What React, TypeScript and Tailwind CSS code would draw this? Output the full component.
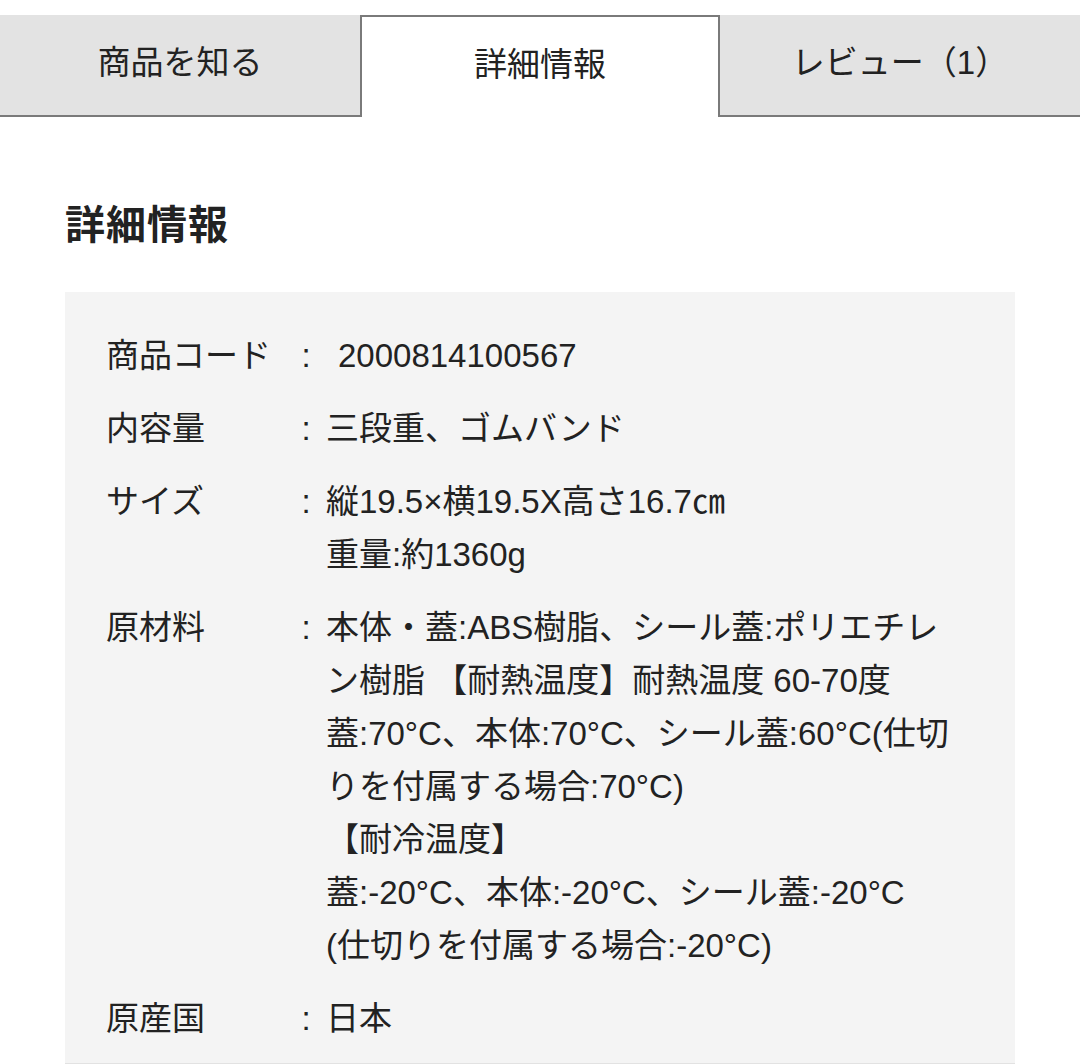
import { useState } from "react";

const tabs = ["商品を知る", "詳細情報", "レビュー（1）"];

interface SpecRow {
  label: string;
  lines: string[];
  pad?: boolean;
}

const rows: SpecRow[] = [
  { label: "商品コード", lines: ["2000814100567"], pad: true },
  { label: "内容量", lines: ["三段重、ゴムバンド"] },
  { label: "サイズ", lines: ["縦19.5×横19.5X高さ16.7㎝", "重量:約1360g"] },
  {
    label: "原材料",
    lines: [
      "本体・蓋:ABS樹脂、シール蓋:ポリエチレ",
      "ン樹脂 【耐熱温度】耐熱温度 60-70度",
      "蓋:70°C、本体:70°C、シール蓋:60°C(仕切",
      "りを付属する場合:70°C)",
      "【耐冷温度】",
      "蓋:-20°C、本体:-20°C、シール蓋:-20°C",
      "(仕切りを付属する場合:-20°C)",
    ],
  },
  { label: "原産国", lines: ["日本"] },
];

export default function App() {
  const [active, setActive] = useState(1);

  return (
    <div
      className="w-[1080px] h-[1064px] overflow-hidden bg-white text-[#222]"
      style={{ fontFamily: '"Liberation Sans", "Noto Sans CJK JP", sans-serif' }}
    >
      {/* タブ */}
      <div className="flex pt-[15px]">
        {tabs.map((t, i) => (
          <button
            key={t}
            onClick={() => setActive(i)}
            className={`h-[102px] flex items-center justify-center text-[33px] pb-[4px] ${
              i === active
                ? "w-[360px] bg-white border-2 border-b-0 border-[#7a7a7a]"
                : "flex-1 bg-[#e3e3e3] border-b-2 border-[#7a7a7a]"
            }`}
          >
            {t}
          </button>
        ))}
      </div>

      <div className="px-[65px]">
        <h2 className="mt-[83px] text-[40px] font-bold leading-[50px] tracking-[1px]">詳細情報</h2>

        <div className="mt-[42px] bg-[#f4f4f4] pt-[37px] pb-[18px] pl-[41px] pr-[20px] border-b-2 border-[#e2e2e2]">
          {rows.map((r) => (
            <div key={r.label} className="flex mb-[20px] last:mb-0 text-[33px] leading-[53px]">
              <div className="w-[180px] shrink-0">{r.label}</div>
              <div className="w-[40px] shrink-0 text-center">:</div>
              <div className={`flex-1 whitespace-nowrap ${r.pad ? "pl-[12px]" : ""}`}>
                {r.lines.map((l, j) => (
                  <div key={j}>{l}</div>
                ))}
              </div>
            </div>
          ))}
        </div>
      </div>
    </div>
  );
}
